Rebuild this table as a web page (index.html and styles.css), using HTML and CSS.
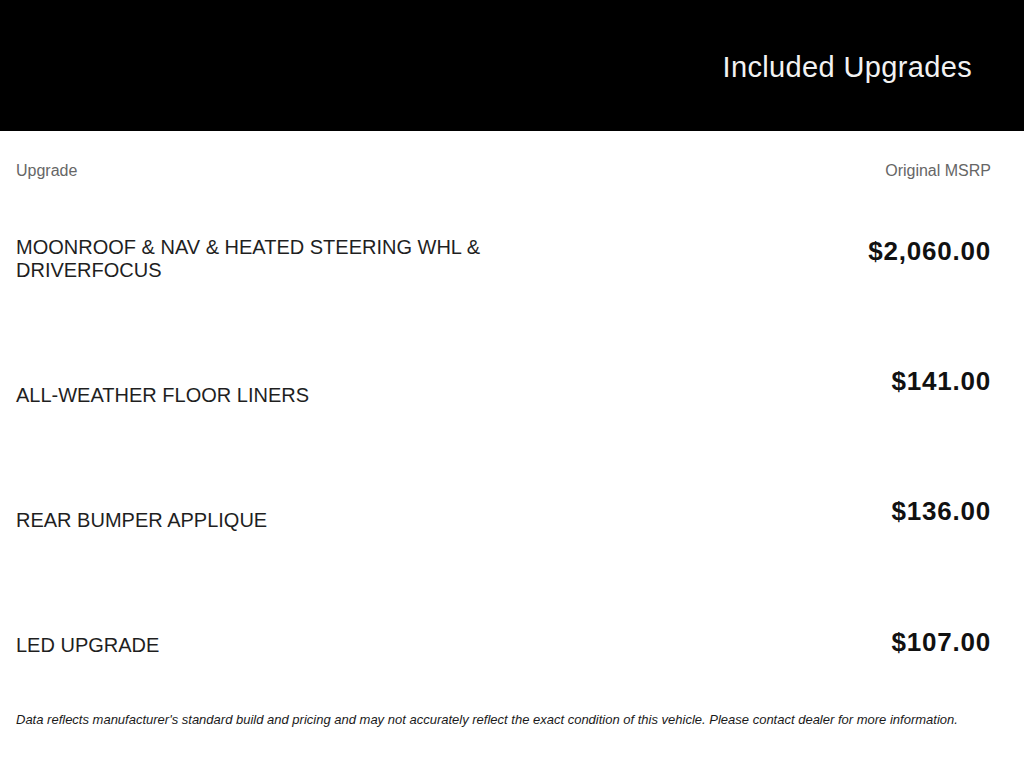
FILE: index.html
```html
<!DOCTYPE html>
<html lang="en">
<head>
<meta charset="utf-8">
<title>Included Upgrades</title>
<link rel="stylesheet" href="styles.css">
</head>
<body>
  <header class="banner">
    <h1 class="banner-title">Included Upgrades</h1>
  </header>
  <main class="content">
    <div class="table-head">
      <span>Upgrade</span>
      <span>Original MSRP</span>
    </div>
    <div class="rows">
      <div class="row">
        <div class="name">MOONROOF &amp; NAV &amp; HEATED STEERING WHL &amp;<br>DRIVERFOCUS</div>
        <div class="price">$2,060.00</div>
      </div>
      <div class="row">
        <div class="name">ALL-WEATHER FLOOR LINERS</div>
        <div class="price">$141.00</div>
      </div>
      <div class="row">
        <div class="name">REAR BUMPER APPLIQUE</div>
        <div class="price">$136.00</div>
      </div>
      <div class="row">
        <div class="name">LED UPGRADE</div>
        <div class="price">$107.00</div>
      </div>
    </div>
    <p class="disclaimer">Data reflects manufacturer's standard build and pricing and may not accurately reflect the exact condition of this vehicle. Please contact dealer for more information.</p>
  </main>
</body>
</html>
```

FILE: styles.css
```css
html, body {
  margin: 0;
  padding: 0;
  background: #ffffff;
}

body {
  font-family: "Liberation Sans", Arial, Helvetica, sans-serif;
  color: #1f1f1f;
  width: 1024px;
  height: 768px;
  overflow: hidden;
}

.banner {
  background: #000000;
  height: 131px;
  box-sizing: border-box;
  padding: 50px 52px 0 0;
  display: flex;
  justify-content: flex-end;
}

.banner-title {
  margin: 0;
  font-size: 29px;
  line-height: 34px;
  font-weight: normal;
  letter-spacing: 0.35px;
  color: #f2f2f2;
}

.content {
  padding: 30px 33px 0 16px;
}

.table-head {
  display: flex;
  justify-content: space-between;
  font-size: 16px;
  line-height: 20px;
  color: #666666;
  margin-bottom: 55px;
}

.row {
  display: flex;
  justify-content: space-between;
  align-items: flex-start;
  height: 130px;
}

.row:last-child {
  height: auto;
}

.name {
  font-size: 20px;
  line-height: 23px;
  color: #1f1f1f;
  padding-top: 0;
}

.row:nth-child(2) .name { padding-top: 18px; }
.row:nth-child(3) .name { padding-top: 13px; }
.row:nth-child(4) .name { padding-top: 8px; }

.price {
  font-size: 26px;
  line-height: 30px;
  font-weight: bold;
  letter-spacing: 0.8px;
  color: #111111;
  padding-top: 0;
}

.row:nth-child(4) .price { padding-top: 1px; }

.disclaimer {
  margin: 55px 0 0;
  font-size: 13px;
  line-height: 16px;
  font-style: italic;
  color: #1a1a1a;
}
```
